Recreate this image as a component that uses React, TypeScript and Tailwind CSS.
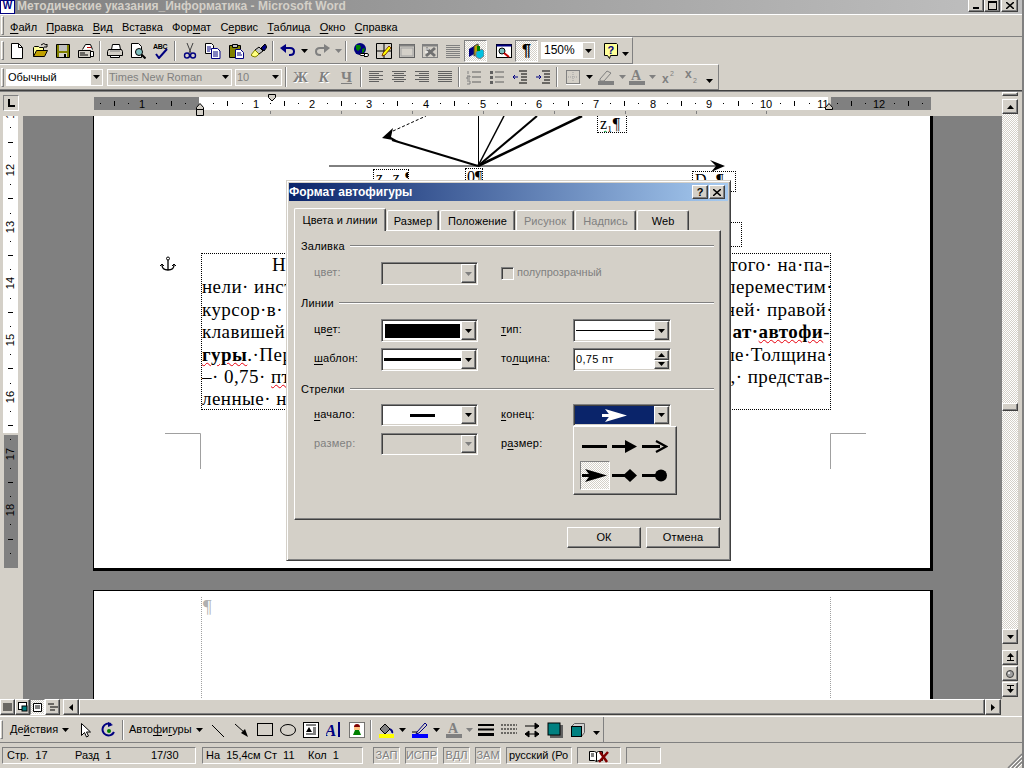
import type { ReactNode } from "react";

const raised =
	"border border-t-white border-l-white border-r-[#404040] border-b-[#404040] shadow-[inset_-1px_-1px_0_#808080]";
const sunken =
	"border border-t-[#808080] border-l-[#808080] border-r-white border-b-white shadow-[inset_1px_1px_0_#404040,inset_-1px_-1px_0_#d4d0c8]";
const thinSunken =
	"border border-t-[#808080] border-l-[#808080] border-r-white border-b-white";
const dither =
	"bg-[repeating-conic-gradient(#d4d0c8_0_25%,#fff_0_50%)] bg-[length:2px_2px]";
const groove = "shrink-0 w-[2px] h-[20px] border-l border-l-[#808080] border-r border-r-white";

function Ico({ children, w = 16, h = 16 }: { children: ReactNode; w?: number; h?: number }) {
	return (
		<svg width={w} height={h} viewBox={`0 0 ${w} ${h}`} className="block shrink-0">
			{children}
		</svg>
	);
}

function Tri({ color = "#000" }: { color?: string }) {
	return (
		<svg width="7" height="4" viewBox="0 0 7 4" className="block shrink-0">
			<polygon points="0,0 7,0 3.5,4" fill={color} />
		</svg>
	);
}

function Btn({ children, on, w = "w-[23px]" }: { children: ReactNode; on?: boolean; w?: string }) {
	return (
		<div
			className={`${w} h-[22px] shrink-0 flex items-center justify-center ${
				on ? `${thinSunken} ${dither}` : ""
			}`}
		>
			{children}
		</div>
	);
}

function Sep() {
	return (
		<div className="w-[6px] shrink-0 flex justify-center">
			<div className={groove} />
		</div>
	);
}

function Drop({ color, w = "w-[11px]" }: { color?: string; w?: string }) {
	return (
		<div className={`${w} h-[22px] shrink-0 flex items-center justify-center`}>
			<Tri color={color} />
		</div>
	);
}

function Grip() {
	return <div className="w-[3px] h-[19px] shrink-0 border border-t-white border-l-white border-r-[#808080] border-b-[#808080]" />;
}

function U({ children }: { children: ReactNode }) {
	return <span className="underline underline-offset-2">{children}</span>;
}

const iconNew = (
	<Ico>
		<path d="M2.5 .5h7l4 4v11h-11z" fill="#fff" stroke="#000" />
		<path d="M9.5 .5v4h4" fill="none" stroke="#000" />
	</Ico>
);
const iconOpen = (
	<Ico>
		<path d="M1.5 13.5v-9l1-1h4l1 1h4v3" fill="#ffff99" stroke="#000" />
		<path d="M1.5 13.5l3-6h11l-3 6z" fill="#c0a000" stroke="#000" />
		<path d="M9 2q3-3 5 0l1-1v3h-3" fill="none" stroke="#000" />
	</Ico>
);
const iconSave = (
	<Ico>
		<path d="M1.5 1.5h13v13h-13z" fill="#808000" stroke="#000" />
		<rect x="4" y="2" width="8" height="6" fill="#c0c0c0" />
		<rect x="4" y="10" width="8" height="4" fill="#d4d0c8" />
		<rect x="9" y="11" width="2" height="3" fill="#000" />
	</Ico>
);
const iconMail = (
	<Ico>
		<path d="M4.5 6.5l3-5h5l2 5" fill="#fff" stroke="#000" />
		<rect x="9" y="4" width="4" height="1" fill="#c00000" />
		<path d="M.5 7.5h12v7H.5z" fill="#d4d0c8" stroke="#000" />
		<path d="M2 10h5M2 12h8" stroke="#000" />
		<path d="M12.5 8.5h3v5h-3z" fill="#fff" stroke="#000" />
	</Ico>
);
const iconPrint = (
	<Ico>
		<path d="M4.5 6.5l1-5h7l1 5" fill="#fff" stroke="#000" />
		<path d="M1.5 6.5h13l1 2v4h-15v-4z" fill="#d4d0c8" stroke="#000" />
		<path d="M3 8h10" stroke="#808080" />
		<path d="M3.5 12.5h9v2h-9z" fill="#fff" stroke="#000" />
	</Ico>
);
const iconPreview = (
	<Ico>
		<path d="M1.5 .5h7l3 3v11h-10z" fill="#fff" stroke="#000" />
		<circle cx="9" cy="9" r="3.5" fill="#80c0c0" stroke="#000" />
		<path d="M11.5 11.5l4 4" stroke="#000" strokeWidth="2" />
	</Ico>
);
const iconSpell = (
	<Ico>
		<text x="0" y="6" fontSize="7" fontWeight="700" fontFamily="Liberation Sans" fill="#000" letterSpacing="-0.3">
			ABC
		</text>
		<path d="M3 11l3 4 8-9" fill="none" stroke="#000080" strokeWidth="2" />
	</Ico>
);
const iconCut = (
	<Ico>
		<path d="M5 0l4 10M11 0L7 10" stroke="#404040" fill="none" />
		<circle cx="5" cy="12.5" r="2.5" fill="none" stroke="#000080" strokeWidth="1.4" />
		<circle cx="11" cy="12.5" r="2.5" fill="none" stroke="#000080" strokeWidth="1.4" />
	</Ico>
);
const iconCopy = (
	<Ico>
		<path d="M.5 .5h6l2 2v8h-8z" fill="#fff" stroke="#000" />
		<path d="M2 4h4M2 6h4M2 8h3" stroke="#000080" />
		<path d="M6.5 5.5h6l2.5 2.5v7.5h-8.5z" fill="#fff" stroke="#000080" />
		<path d="M8 9h5M8 11h5M8 13h5" stroke="#000080" />
	</Ico>
);
const iconPaste = (
	<Ico>
		<path d="M1.5 2.5h11v12h-11z" fill="#808000" stroke="#000" />
		<path d="M4.5 1.5h5v3h-5z" fill="#c0c0c0" stroke="#000" />
		<path d="M7.5 6.5h5l3 3v6h-8z" fill="#fff" stroke="#000080" />
		<path d="M9 10h4M9 12h5" stroke="#000080" />
	</Ico>
);
const iconBrush = (
	<Ico>
		<path d="M10 5l3 3 3-4-2-3z" fill="#000080" stroke="#000" />
		<path d="M8 4l4 4-4 3-4-4z" fill="#c0c0c0" stroke="#000" />
		<path d="M4 7l4 4-2 2-2 1-3-1-1-1z" fill="#ffff80" stroke="#808000" />
	</Ico>
);
const iconUndo = (
	<Ico>
		<path d="M4 5h6q4 0 4 3.5t-4 3.5h-1" fill="none" stroke="#000080" strokeWidth="2" />
		<polygon points="0,5 6,1 6,10" fill="#000080" />
	</Ico>
);
const iconRedo = (
	<Ico>
		<path d="M12 5h-6q-4 0-4 3.5t4 3.5h1" fill="none" stroke="#808080" strokeWidth="2" />
		<polygon points="16,5 10,1 10,10" fill="#808080" />
	</Ico>
);
const iconWeb = (
	<Ico>
		<circle cx="7" cy="6" r="6" fill="#000080" />
		<path d="M3 2h4l1 3-3 3-2-2zM9 6l3-1-1 4-2 1z" fill="#008000" />
		<path d="M8 12.5h3.5v-2h-3.5a1 1 0 0 0 0 2zM11 13.500h3a1.5 1.5 0 0 0 0-3h-3" fill="#fff" stroke="#000" />
	</Ico>
);
const iconTables = (
	<Ico>
		<path d="M.5 .5h15v15H.5zM.5 8h15M8 .5v15" fill="none" stroke="#000" />
		<path d="M6 13l1-3 6-7 2 2-6 7z" fill="#ffff00" stroke="#804000" />
	</Ico>
);
const iconFrame = (
	<Ico>
		<rect x=".5" y="1.5" width="15" height="13" fill="#d4d0c8" stroke="#606060" />
		<rect x=".5" y="1.5" width="15" height="2" fill="#808080" />
		<rect x="2" y="5" width="12" height="8" fill="#d4d0c8" stroke="#a0a0a0" />
	</Ico>
);
const iconExcel = (
	<Ico>
		<rect x=".5" y="1.5" width="15" height="13" fill="#d4d0c8" stroke="#808080" />
		<rect x=".5" y="1.5" width="15" height="2" fill="#808080" />
		<path d="M4 5l9 8M13 5L4 13" stroke="#707070" strokeWidth="3" />
		<path d="M3 6h4M3 9h3" stroke="#fff" />
	</Ico>
);
const iconCols = (
	<Ico>
		<path d="M1 2.5h14M1 4.5h14M1 6.5h14M1 8.5h14M1 10.5h14M1 12.5h14M1 14.5h14" stroke="#808080" />
	</Ico>
);
const iconDraw = (
	<Ico>
		<path d="M1 14l5-3V3l-5 3z" fill="#000080" />
		<path d="M6 3l4-2 1 9-5 3z" fill="#c0a000" stroke="#404040" />
		<path d="M8 9l6-3 2 2v5l-4 3-4-2z" fill="#00c0e0" stroke="#808080" />
		<rect x="9" y="3" width="3" height="5" fill="#008000" />
	</Ico>
);
const iconMap = (
	<Ico>
		<rect x=".5" y="1.5" width="15" height="13" fill="#fff" stroke="#000" />
		<rect x=".5" y="1.5" width="15" height="2" fill="#000080" />
		<circle cx="6" cy="8" r="3" fill="#80c0c0" stroke="#000" />
		<path d="M8 10l5 4" stroke="#c00000" strokeWidth="2" />
	</Ico>
);
const iconHelp = (
	<Ico>
		<path d="M1.5 .5h12l1 1v11h-7l-1 3-2-3h-3z" fill="#ffff99" stroke="#000" />
		<text x="4.5" y="11" fontSize="11" fontWeight="700" fontFamily="Liberation Sans" fill="#000080">
			?
		</text>
	</Ico>
);

function Lines({ xs, color = "#606060" }: { xs: [number, number][]; color?: string }) {
	return (
		<Ico>
			{xs.map(([a, b], i) => (
				<rect key={i} x={a} y={2 + i * 2} width={b - a} height="1" fill={color} />
			))}
		</Ico>
	);
}

const iconNumbered = (
	<Ico>
		<path d="M6 3h9M6 8h9M6 13h9" stroke="#606060" />
		<path d="M2 2v3M1 7h3v1H1v2h3M1 12h3v3H1" stroke="#808080" fill="none" />
	</Ico>
);
const iconBullets = (
	<Ico>
		<path d="M6 3h9M6 8h9M6 13h9" stroke="#606060" />
		<rect x="1" y="2" width="3" height="3" fill="#606060" />
		<rect x="1" y="7" width="3" height="3" fill="#606060" />
		<rect x="1" y="12" width="3" height="3" fill="#606060" />
	</Ico>
);
const iconOutdent = (
	<Ico>
		<path d="M7 2h8M9 5h6M9 8h6M9 11h6M7 14h8" stroke="#000" />
		<path d="M6 8H1M3 6L1 8l2 2" stroke="#000080" fill="none" />
	</Ico>
);
const iconIndent = (
	<Ico>
		<path d="M7 2h8M9 5h6M9 8h6M9 11h6M7 14h8" stroke="#000" />
		<path d="M1 8h5M4 6l2 2-2 2" stroke="#000080" fill="none" />
	</Ico>
);
const iconBorders = (
	<Ico>
		<rect x="1.5" y="1.5" width="13" height="13" fill="#d4d0c8" stroke="#808080" />
		<path d="M8 3v10M3 8h10" stroke="#a0a0a0" strokeDasharray="1 1" />
		<path d="M1 15.5h15" stroke="#fff" />
	</Ico>
);
const iconHighlight = (
	<Ico>
		<path d="M2 10l7-8 4 2-7 8H2z" fill="#d4d0c8" stroke="#808080" />
		<rect x="0" y="12" width="16" height="4" fill="#808080" />
	</Ico>
);
const iconColorA = (
	<Ico>
		<text x="2" y="11" fontSize="14" fontWeight="700" fontFamily="Liberation Serif" fill="#808080">
			A
		</text>
		<rect x="0" y="12" width="16" height="4" fill="#808080" />
	</Ico>
);
const iconSup = (
	<Ico>
		<text x="1" y="14" fontSize="12" fontWeight="700" fontFamily="Liberation Sans" fill="#808080">
			x
		</text>
		<text x="9" y="7" fontSize="7" fontFamily="Liberation Sans" fill="#808080">
			2
		</text>
	</Ico>
);
const iconSub = (
	<Ico>
		<text x="1" y="9" fontSize="12" fontWeight="700" fontFamily="Liberation Sans" fill="#808080">
			x
		</text>
		<text x="9" y="14" fontSize="7" fontFamily="Liberation Sans" fill="#808080">
			2
		</text>
	</Ico>
);

function TitleBar() {
	return (
		<div className="h-[15px] shrink-0 border-b border-b-white flex items-center bg-[linear-gradient(90deg,#808080,#c0c0c0)] overflow-hidden">
			<div className="w-[15px] h-[14px] shrink-0 bg-white border border-[#000080] text-[#000080] text-[10px] leading-[10px] font-bold text-center">
				W
			</div>
			<span className="ml-[2px] text-[12px] font-bold text-[#d4d0c8] whitespace-nowrap leading-[14px] -mt-[2px]">
				Методические указания_Информатика - Microsoft Word
			</span>
			<div className="ml-auto flex mr-[4px] -mt-[3px]">
				<div className={`w-[16px] h-[13px] ${raised} bg-[#d4d0c8] flex items-end justify-center pb-[2px]`}>
					<div className="w-[6px] h-[2px] bg-black" />
				</div>
				<div className={`w-[16px] h-[13px] ${raised} bg-[#d4d0c8] flex items-end justify-center pb-[1px]`}>
					<div className="w-[9px] h-[9px] border border-black border-t-2" />
				</div>
				<div className={`w-[17px] h-[13px] ml-[1px] ${raised} bg-[#d4d0c8] flex items-center justify-center`}>
					<svg width="8" height="7" viewBox="0 0 8 7" className="block">
						<path d="M0 0l8 7M8 0L0 7" stroke="#000" strokeWidth="1.5" />
					</svg>
				</div>
			</div>
		</div>
	);
}

function MenuBar() {
	return (
		<div className="h-[22px] shrink-0 border-b border-b-[#808080] flex items-center pl-[1px]">
			<Grip />
			<div className="ml-[6px] mt-[3px] flex gap-[9.25px] text-[11px] text-black">
				<span><U>Ф</U>айл</span>
				<span><U>П</U>равка</span>
				<span><U>В</U>ид</span>
				<span>Вст<U>а</U>вка</span>
				<span>Фор<U>м</U>ат</span>
				<span>С<U>е</U>рвис</span>
				<span><U>Т</U>аблица</span>
				<span><U>О</U>кно</span>
				<span><U>С</U>правка</span>
			</div>
		</div>
	);
}

function StandardBar() {
	return (
		<div className="h-[27px] shrink-0 flex">
			<div className="w-[633px] border-r border-r-[#808080] border-b border-b-[#808080] border-t border-t-white flex items-center pl-[1px]">
				<Grip />
				<div className="w-[1px]" />
				<Btn>{iconNew}</Btn>
				<Btn>{iconOpen}</Btn>
				<Btn>{iconSave}</Btn>
				<Btn>{iconMail}</Btn>
				<Sep />
				<Btn>{iconPrint}</Btn>
				<Btn>{iconPreview}</Btn>
				<Btn>{iconSpell}</Btn>
				<Sep />
				<Btn>{iconCut}</Btn>
				<Btn>{iconCopy}</Btn>
				<Btn>{iconPaste}</Btn>
				<Btn>{iconBrush}</Btn>
				<Sep />
				<Btn>{iconUndo}</Btn>
				<Drop w="w-[11px]" />
				<Btn>{iconRedo}</Btn>
				<Drop color="#808080" w="w-[10px]" />
				<Sep />
				<Btn>{iconWeb}</Btn>
				<Btn>{iconTables}</Btn>
				<Btn>{iconFrame}</Btn>
				<Btn>{iconExcel}</Btn>
				<Btn>{iconCols}</Btn>
				<Btn on>{iconDraw}</Btn>
				<div className="w-[5px]" />
				<Btn>{iconMap}</Btn>
				<Btn on>
					<span className="text-[16px] font-bold leading-none text-black">¶</span>
				</Btn>
				<div className="w-[3px]" />
				<div className="w-[54px] h-[17px] flex bg-white border border-white">
					<span className="flex-1 pl-[2px] text-[12px] leading-[15px] text-black">150%</span>
					<div className="w-[11px] bg-[#d4d0c8] flex items-center justify-center"><Tri /></div>
				</div>
				<div className="w-[4px]" />
				<Btn>{iconHelp}</Btn>
				<div className="w-[7px] mt-[7px]"><Tri /></div>
			</div>
		</div>
	);
}

function FormatCombo({ w, text, off }: { w: string; text: string; off?: boolean }) {
	return (
		<div className={`${w} h-[17px] shrink-0 flex border border-white ${off ? "" : "bg-white"}`}>
			<span className={`flex-1 pl-[1px] text-[11px] leading-[15px] whitespace-nowrap overflow-hidden ${off ? "text-[#808080]" : "text-black"}`}>
				{text}
			</span>
			<div className="w-[11px] bg-[#d4d0c8] flex items-center justify-center"><Tri /></div>
		</div>
	);
}

function FormatBar() {
	return (
		<div className="h-[26px] shrink-0 flex">
			<div className="w-[719px] border-r border-r-[#808080] border-b border-b-[#808080] border-t border-t-white flex items-center pl-[1px]">
				<Grip />
				<div className="w-[2px]" />
				<FormatCombo w="w-[97px]" text="Обычный" />
				<div className="w-[4px]" />
				<FormatCombo w="w-[125px]" text="Times New Roman" off />
				<div className="w-[3px]" />
				<FormatCombo w="w-[47px]" text="10" off />
				<div className="w-[1px]" />
				<Sep />
				<Btn><span className="font-['Liberation_Serif'] font-bold text-[15px] text-[#808080] leading-none [text-shadow:1px_1px_0_#fff]">Ж</span></Btn>
				<Btn><span className="font-['Liberation_Serif'] font-bold italic text-[15px] text-[#808080] leading-none [text-shadow:1px_1px_0_#fff]">К</span></Btn>
				<Btn><span className="font-['Liberation_Serif'] font-bold underline text-[15px] text-[#808080] leading-none">Ч</span></Btn>
				<Sep />
				<Btn><Lines xs={[[1, 15], [1, 11], [1, 15], [1, 11], [1, 15], [1, 11]]} /></Btn>
				<Btn><Lines xs={[[1, 15], [3, 13], [1, 15], [3, 13], [1, 15], [3, 13]]} /></Btn>
				<Btn><Lines xs={[[1, 15], [5, 15], [1, 15], [5, 15], [1, 15], [5, 15]]} /></Btn>
				<Btn><Lines xs={[[1, 15], [1, 15], [1, 15], [1, 15], [1, 15], [1, 15]]} /></Btn>
				<Sep />
				<Btn>{iconNumbered}</Btn>
				<Btn>{iconBullets}</Btn>
				<Btn>{iconOutdent}</Btn>
				<Btn>{iconIndent}</Btn>
				<Sep />
				<div className="w-[1px]" />
				<Btn>{iconBorders}</Btn>
				<Drop w="w-[10px]" />
				<Btn>{iconHighlight}</Btn>
				<Drop color="#808080" w="w-[10px]" />
				<Btn w="w-[20px]">{iconColorA}</Btn>
				<Drop color="#808080" w="w-[10px]" />
				<Btn>{iconSup}</Btn>
				<Btn>{iconSub}</Btn>
				<div className="w-[7px] ml-[3px] mt-[7px]"><Tri /></div>
			</div>
		</div>
	);
}

const CM = 56.7;
const rulerMarks = Array.from({ length: 60 }, (_, i) => -1.75 + i * 0.25);

function HRuler() {
	const xOf = (v: number) => 199 + v * CM;
	return (
		<svg width="840" height="24" viewBox="94 92 840 24" className="block">
			<rect x="94" y="97" width="105" height="13" fill="#808080" />
			<rect x="199" y="97" width="629" height="13" fill="#fff" />
			<rect x="831" y="97" width="100" height="13" fill="#808080" />
			{rulerMarks.map((v) => {
				const x = Math.round(xOf(v));
				if (x > 928) return null;
				if (Number.isInteger(v)) {
					if (v === 0) return null;
					return (
						<text key={v} x={x} y="108" fontSize="11" textAnchor="middle" fontFamily="Liberation Sans" fill="#000">
							{Math.abs(v)}
						</text>
					);
				}
				if (v % 0.5 === 0) return <rect key={v} x={x} y="101" width="1" height="5" fill="#000" />;
				return <rect key={v} x={x} y="103" width="1" height="1" fill="#000" />;
			})}
			{[270, 341, 412, 483, 554, 625, 696, 766].map((x) => (
				<rect key={x} x={x} y="111" width="1" height="3" fill="#808080" />
			))}
			<path d="M196.5 109.5v-2l3.5-4 3.5 4v2zM196.5 109.5h7v6h-7z" fill="#d4d0c8" stroke="#000" />
			<path d="M268.5 94.5h7v3l-3.5 3.5-3.5-3.5z" fill="#d4d0c8" stroke="#000" />
			<path d="M825.5 109.5v-2l3.5-4 3.5 4v2z" fill="#d4d0c8" stroke="#000" />
		</svg>
	);
}

const vMarks = Array.from({ length: 34 }, (_, i) => 11 + i * 0.25);

function VRuler() {
	const yOf = (v: number) => 170 + (v - 12) * CM;
	return (
		<svg width="23" height="583" viewBox="0 116 23 583" className="block">
			<rect x="3" y="116" width="15" height="317" fill="#fff" />
			<rect x="4" y="435" width="14" height="133" fill="#808080" />
			{vMarks.map((v) => {
				const y = Math.round(yOf(v));
				if (y > 566 || y === 433) return null;
				if (Number.isInteger(v)) {
					return (
						<text key={v} x="0" y="0" transform={`translate(14 ${y}) rotate(-90)`} fontSize="11" textAnchor="middle" fontFamily="Liberation Sans" fill="#000">
							{v}
						</text>
					);
				}
				if (v % 0.5 === 0) return <rect key={v} x="8" y={y} width="5" height="1" fill="#000" />;
				return <rect key={v} x="10" y={y} width="1" height="1" fill="#000" />;
			})}
		</svg>
	);
}

function Note({ className, children }: { className: string; children?: ReactNode }) {
	return (
		<div className={`absolute border border-dotted border-black font-['Liberation_Serif'] text-[16px] leading-[16px] text-black whitespace-nowrap overflow-hidden ${className}`}>
			{children}
		</div>
	);
}

function Diagram() {
	return (
		<svg width="836" height="455" viewBox="94 116 836 455" className="absolute left-0 top-0">
			<path d="M329 166H716" stroke="#000" strokeWidth="1" />
			<polygon points="725,166 710,160 716,166 711,172" fill="#000" />
			<path d="M478 166L392 140" stroke="#000" strokeWidth="2" />
			<polygon points="382,138 393,128 391,137 398,141" fill="#000" />
			<path d="M393 131L426 116" stroke="#000" strokeDasharray="3 2" />
			<path d="M478.5 166V116" stroke="#000" />
			<path d="M478 166L504 116" stroke="#000" strokeWidth="1.5" />
			<path d="M478 166L537 116" stroke="#000" strokeWidth="2" />
			<path d="M478 166L582 116" stroke="#000" strokeWidth="2.5" />
			<path d="M165 433.5H200.5V469M866 433.5H830.5V469" fill="none" stroke="#a0a0a0" />
		</svg>
	);
}

function Wavy({ children }: { children: ReactNode }) {
	return <span className="underline decoration-wavy decoration-red-600 decoration-1">{children}</span>;
}

function TextLine({ left, right, hang }: { left: ReactNode; right?: ReactNode; hang?: boolean }) {
	return (
		<div className="h-[22.4px] flex justify-between whitespace-pre">
			<span>{left}</span>
			<span className={hang ? "-mr-[3px]" : ""}>{right}</span>
		</div>
	);
}

function Doc() {
	return (
		<div className="flex-1 bg-[#808080] overflow-hidden pl-[70px]">
			<div className="relative w-[840px] h-[455px] bg-white border-l border-l-black border-r-[3px] border-r-black border-b-[3px] border-b-black">
				<Diagram />
				<Note className="left-[503px] top-0 w-[30px] h-[17px] border-t-0 pl-[2px]">
					<span className="underline decoration-wavy decoration-green-600 decoration-1">z₁</span>¶
				</Note>
				<Note className="left-[279px] top-[53px] w-[36px] h-[40px] pl-[2px]">z₂ z₃¶</Note>
				<Note className="left-[371px] top-[52px] w-[18px] h-[40px] pl-[1px]">0¶</Note>
				<Note className="left-[598px] top-[55px] w-[44px] h-[21px] pl-[2px]">D₁ ¶</Note>
				<Note className="left-[560px] top-[106px] w-[88px] h-[25px]" />
				<svg width="16" height="16" viewBox="0 0 16 16" className="absolute left-[66px] top-[140px]">
					<circle cx="8" cy="2.5" r="1.5" fill="none" stroke="#000" />
					<path d="M8 4v10M2 9q0 5 6 5t6-5" fill="none" stroke="#000" strokeWidth="1.3" />
					<path d="M0 10l2-2 2 2M12 10l2-2 2 2" fill="none" stroke="#000" />
				</svg>
				<div className="absolute left-[107px] top-[137px] w-[630px] h-[157px] border border-dotted border-black font-['Liberation_Serif'] text-[19px] leading-[22.4px] text-black tracking-[0.45px]">
					<TextLine left={<span className="pl-[70px]">Н</span>} right="крытого· на·па-" />
					<TextLine left="нели· инст" right="переместим·" hang />
					<TextLine left="курсор·в· с" right="ней· правой·" hang />
					<TextLine left="клавишей" right={<><b>ат·</b><b><Wavy>автофи</Wavy></b>-</>} />
					<TextLine left={<><b><Wavy>гуры</Wavy></b>.·Пер</>} right="ле·Толщина·" hang />
					<TextLine left={<>–· 0,75· <Wavy>пт</Wavy>,</>} right="ы,· представ-" />
					<TextLine left="ленные· на" />
				</div>
			</div>
			<div className="relative mt-[19px] w-[840px] h-[200px] bg-white border-l border-l-black border-t border-t-black border-r-[3px] border-r-black">
				<div className="absolute left-[107px] top-[6px] bottom-0 border-l border-dotted border-l-[#a0a0a0] pl-[1px] font-['Liberation_Serif'] text-[19px] leading-[20px] text-[#b0b0b0]">
					¶
				</div>
				<div className="absolute left-[736px] top-[6px] bottom-0 border-l border-dotted border-l-[#a0a0a0]" />
			</div>
		</div>
	);
}

function ScrollBtn({ children }: { children: ReactNode }) {
	return <div className={`w-[16px] h-[15px] shrink-0 bg-[#d4d0c8] flex items-center justify-center ${raised}`}>{children}</div>;
}

function UpTri() {
	return (
		<svg width="7" height="4" viewBox="0 0 7 4" className="block">
			<polygon points="0,4 7,4 3.5,0" fill="#000" />
		</svg>
	);
}

function Dbl({ up }: { up?: boolean }) {
	return (
		<svg width="7" height="9" viewBox="0 0 7 9" className="block">
			{up ? (
				<>
					<polygon points="0,4 7,4 3.5,0" fill="#000" />
					<rect x="0" y="7" width="7" height="1" fill="#000" />
					<rect x="3" y="4" width="1" height="3" fill="#000" />
				</>
			) : (
				<>
					<rect x="0" y="0" width="7" height="1" fill="#000" />
					<polygon points="0,4 7,4 3.5,8" fill="#000" />
					<rect x="3" y="1" width="1" height="3" fill="#000" />
				</>
			)}
		</svg>
	);
}

function VScroll() {
	return (
		<div className="w-[20px] shrink-0 flex flex-col">
			<div className={`w-[16px] h-[4px] shrink-0 ${raised}`} />
			<div className="h-[3px] shrink-0" />
			<ScrollBtn><UpTri /></ScrollBtn>
			<div className={`w-[16px] h-[289px] shrink-0 ${dither}`} />
			<div className={`w-[16px] h-[8px] shrink-0 ${raised}`} />
			<div className={`w-[16px] flex-1 ${dither}`} />
			<ScrollBtn><Tri /></ScrollBtn>
			<div className="h-[6px] shrink-0" />
			<ScrollBtn><Dbl up /></ScrollBtn>
			<div className="h-[1px] shrink-0" />
			<ScrollBtn>
				<svg width="8" height="8" viewBox="0 0 8 8" className="block">
					<circle cx="4" cy="4" r="3.5" fill="#a0a0a0" stroke="#404040" />
					<circle cx="3" cy="3" r="1" fill="#fff" />
				</svg>
			</ScrollBtn>
			<div className="h-[1px] shrink-0" />
			<ScrollBtn><Dbl /></ScrollBtn>
			<div className="h-[2px] shrink-0" />
		</div>
	);
}

function HScroll() {
	const views = [
		<svg key="a" width="9" height="9" viewBox="0 0 9 9" className="block"><path d="M0 1h9M0 3h9M0 5h9M0 7h9" stroke="#000" /></svg>,
		<svg key="b" width="10" height="10" viewBox="0 0 10 10" className="block"><rect x=".5" y=".5" width="8" height="7" fill="#fff" stroke="#000" /><rect x="4" y="4" width="5" height="5" fill="#008080" stroke="#000" /></svg>,
		<svg key="c" width="9" height="9" viewBox="0 0 9 9" className="block"><path d="M.5 .5h8v8h-8z" fill="#fff" stroke="#000" /><path d="M2 3h5M2 5h5" stroke="#000" /></svg>,
		<svg key="d" width="10" height="9" viewBox="0 0 10 9" className="block"><path d="M0 1h6M2 4h8M2 7h5" stroke="#000" /></svg>,
	];
	return (
		<div className="h-[18px] shrink-0 flex border-b border-b-white pb-[1px]">
			{views.map((v, i) => (
				<div key={i} className={`w-[15px] h-[16px] flex items-center justify-center ${i === 2 ? `${thinSunken} ${dither}` : raised}`}>
					{v}
				</div>
			))}
			<div className="w-[3px]" />
			<div className={`w-[16px] h-[16px] flex items-center justify-center ${raised}`}>
				<svg width="4" height="7" viewBox="0 0 4 7" className="block"><polygon points="4,0 4,7 0,3.5" fill="#000" /></svg>
			</div>
			<div className={`w-[906px] h-[16px] ${raised}`} />
			<div className={`w-[16px] h-[16px] flex items-center justify-center ${raised}`}>
				<svg width="4" height="7" viewBox="0 0 4 7" className="block"><polygon points="0,0 0,7 4,3.5" fill="#000" /></svg>
			</div>
		</div>
	);
}

function DrawBar() {
	return (
		<div className="h-[26px] shrink-0 flex border-b border-b-[#808080]">
			<div className="w-[604px] border-r border-r-[#808080] flex items-center">
				<Grip />
				<div className="w-[7px]" />
				<div className="w-[59px] flex items-center gap-[4px] text-[11px] text-black whitespace-nowrap">
					<span>Де<U>й</U>ствия</span>
					<Tri />
				</div>
				<div className="w-[5px]" />
				<Btn>
					<Ico><path d="M3.5 1.5v12l3-3 2 4.5 2-1-2-4h4z" fill="#fff" stroke="#000" /></Ico>
				</Btn>
				<Btn>
					<Ico>
						<path d="M13 10a6 6 0 1 1-3-8" fill="none" stroke="#000080" strokeWidth="2" />
						<polygon points="7,0 12,3 7,5" fill="#000080" />
						<circle cx="8" cy="9" r="2" fill="#008000" />
					</Ico>
				</Btn>
				<Sep />
				<div className="w-[3px]" />
				<div className="w-[78px] flex items-center gap-[4px] text-[11px] text-black whitespace-nowrap">
					<span>Авто<U>ф</U>и<U>г</U>уры</span>
					<Tri />
				</div>
				<Btn><Ico><path d="M1 3l12 12" stroke="#000" /></Ico></Btn>
				<Btn><Ico><path d="M1 2l10 9" stroke="#000" /><polygon points="14,15 7,11 11,7" fill="#000" /></Ico></Btn>
				<Btn><Ico><rect x=".5" y="1.5" width="15" height="12" fill="none" stroke="#000" /></Ico></Btn>
				<Btn><Ico><ellipse cx="8" cy="8" rx="7.5" ry="5.5" fill="none" stroke="#000" /></Ico></Btn>
				<Btn>
					<Ico>
						<rect x=".5" y=".5" width="15" height="15" fill="#fff" stroke="#000" />
						<path d="M3 3h10" stroke="#000" />
						<polygon points="3,10 6,5 9,10" fill="#000" />
						<path d="M10 6h3M10 8h3M10 10h3M3 12h10" stroke="#000" />
					</Ico>
				</Btn>
				<Btn>
					<Ico>
						<text x="-1" y="14" fontSize="17" fontWeight="700" fontStyle="italic" fontFamily="Liberation Serif" fill="#000080">A</text>
						<rect x="12" y="0" width="2" height="15" fill="#000080" />
					</Ico>
				</Btn>
				<Btn>
					<Ico>
						<rect x=".5" y=".5" width="15" height="15" fill="#fff" stroke="#000" strokeDasharray="1 1" />
						<circle cx="8" cy="5" r="3" fill="#800000" />
						<rect x="5" y="5" width="6" height="3" fill="#ffc080" />
						<path d="M4 13l2-5h4l2 5z" fill="#008000" />
					</Ico>
				</Btn>
				<Sep />
				<Btn>
					<Ico>
						<path d="M2 7l5-5 5 5-5 5z" fill="#808080" stroke="#000" />
						<path d="M12 7q3 2 2 4" stroke="#000080" fill="none" strokeWidth="2" />
						<rect x="1" y="12" width="15" height="4" fill="#ffff00" />
					</Ico>
				</Btn>
				<Drop w="w-[11px]" />
				<Btn>
					<Ico>
						<path d="M5 10L13 1l2 2-8 8-3 1z" fill="#d4d0c8" stroke="#000080" />
						<path d="M0 10h5" stroke="#000" />
						<rect x="0" y="12" width="16" height="4" fill="#0000ff" />
					</Ico>
				</Btn>
				<Drop w="w-[11px]" />
				<Btn>{iconColorA}</Btn>
				<Drop color="#808080" w="w-[9px]" />
				<Btn><Ico><path d="M0 3h16M0 7.5h16" stroke="#000" strokeWidth="2" /><path d="M0 12.5h16" stroke="#000" strokeWidth="3" /></Ico></Btn>
				<Btn><Ico><path d="M0 3h16M0 7h16M0 11h16" stroke="#000" strokeDasharray="2 1" /></Ico></Btn>
				<Btn>
					<Ico>
						<path d="M1 4h14M15 4l-4-3v6zM1 12h14M1 12l4-3v6zM15 12l-4-3v6z" stroke="#000" fill="#000" />
					</Ico>
				</Btn>
				<Btn>
					<Ico>
						<rect x="3" y="3" width="13" height="13" fill="#606060" />
						<rect x="1" y="1" width="12" height="12" fill="#008080" stroke="#000" />
					</Ico>
				</Btn>
				<Btn>
					<Ico>
						<path d="M1.5 4.5l3-3h10v9l-3 4h-10z" fill="#d0d0d0" stroke="#606060" />
						<rect x="1.5" y="4.5" width="10" height="10" fill="#008080" stroke="#000" />
					</Ico>
				</Btn>
				<div className="w-[7px] ml-[4px] mt-[7px]"><Tri /></div>
			</div>
		</div>
	);
}

function StatusCell({ w, off, children, className = "" }: { w: string; off?: boolean; children?: ReactNode; className?: string }) {
	return (
		<div
			className={`${w} h-[17px] shrink-0 ${thinSunken} flex items-center whitespace-pre text-[11px] leading-[15px] ${
				off ? "text-[#808080] justify-center [text-shadow:1px_1px_0_#fff]" : "text-black"
			} ${className}`}
		>
			{children}
		</div>
	);
}

function StatusBar() {
	return (
		<div className="h-[25px] shrink-0 flex items-start pt-[4px] pl-[2px] relative">
			<StatusCell w="w-[194px]">
				<span className="w-[72px] pl-[4px]">Стр.  17</span>
				<span className="w-[76px]">Разд  1</span>
				<span>17/30</span>
			</StatusCell>
			<div className="w-[6px]" />
			<StatusCell w="w-[161px]">
				<span className="w-[61px] pl-[3px]">На  15,4см</span>
				<span className="w-[44px]">Ст  11</span>
				<span>Кол  1</span>
			</StatusCell>
			<div className="w-[10px]" />
			<StatusCell w="w-[27px]" off>ЗАП</StatusCell>
			<div className="w-[5px]" />
			<StatusCell w="w-[33px]" off>ИСПР</StatusCell>
			<div className="w-[5px]" />
			<StatusCell w="w-[27px]" off>ВДЛ</StatusCell>
			<div className="w-[5px]" />
			<StatusCell w="w-[26px]" off>ЗАМ</StatusCell>
			<div className="w-[5px]" />
			<StatusCell w="w-[66px]" className="pl-[2px]">русский (Ро</StatusCell>
			<div className="w-[5px]" />
			<StatusCell w="w-[44px]" className="justify-center">
				<svg width="22" height="14" viewBox="0 0 22 14" className="block">
					<path d="M1.5 2.5h5l2 1 2-1h4v9h-4l-2 1-2-1h-5z" fill="#fff" stroke="#000" />
					<path d="M8.5 3.5v9M3 5h3M3 7h3" stroke="#000" />
					<path d="M11 13L20 3M12 3l7 10" stroke="#800000" strokeWidth="2.5" />
				</svg>
			</StatusCell>
			<div className="w-[5px]" />
			<StatusCell w="w-[35px]" />
			<svg width="15" height="15" viewBox="0 0 15 15" className="absolute right-0 bottom-0">
				<path d="M15 1L1 15M15 5L5 15M15 9l-6 6" stroke="#808080" strokeWidth="1.5" />
				<path d="M15 3L3 15M15 7l-8 8M15 11l-4 4" stroke="#fff" />
			</svg>
		</div>
	);
}

function DlgCombo({ w = "w-[97px]", off, selected, children }: { w?: string; off?: boolean; selected?: boolean; children?: ReactNode }) {
	return (
		<div className={`${w} h-full shrink-0 ${sunken} ${off ? "" : selected ? "bg-[#0a246a]" : "bg-white"} flex items-stretch p-[1px]`}>
			<div className="flex-1 flex items-center justify-center pl-[1px] overflow-hidden">{children}</div>
			<div className={`w-[15px] shrink-0 bg-[#d4d0c8] ${raised} flex items-center justify-center`}>
				<Tri color={off ? "#808080" : "#000"} />
			</div>
		</div>
	);
}

function Heading({ title, className }: { title: string; className: string }) {
	return (
		<div className={`h-[16px] flex items-center pl-[6px] pr-[6px] gap-[5px] ${className}`}>
			<span className="text-[11px] tracking-[0.2px] text-black">{title}</span>
			<div className="flex-1 h-[2px] border-t border-t-[#808080] border-b border-b-white" />
		</div>
	);
}

function Label({ w, off, children }: { w: string; off?: boolean; children: ReactNode }) {
	return <span className={`${w} shrink-0 text-[11px] tracking-[0.2px] -mt-[2px] ${off ? "text-[#808080]" : "text-black"}`}>{children}</span>;
}

function Row({ h, className, children }: { h: string; className: string; children: ReactNode }) {
	return <div className={`${h} shrink-0 flex items-center pl-[19px] ${className}`}>{children}</div>;
}

function ArrowEnd({ kind, white }: { kind: string; white?: boolean }) {
	const c = white ? "#fff" : "#000";
	return (
		<svg width="26" height="13" viewBox="0 0 26 13" className="block">
			<rect x="0" y="5" width={kind === "none" ? 25 : 18} height="3" fill={c} />
			{kind === "tri" && <polygon points="13,0 25,6.5 13,13" fill={c} />}
			{kind === "open" && <path d="M14 1l10 5.5L14 12" fill="none" stroke={c} strokeWidth="2.2" />}
			{kind === "stealth" && <polygon points="3,0 25,6.5 3,13 8,6.5" fill={c} />}
			{kind === "diamond" && <polygon points="18,0 25,6.5 18,13 11,6.5" fill={c} />}
			{kind === "oval" && <circle cx="19" cy="6.5" r="6" fill={c} />}
		</svg>
	);
}

const tabs = [
	{ t: "Размер", w: "w-[52px]" },
	{ t: "Положение", w: "w-[75px]" },
	{ t: "Рисунок", w: "w-[58px]", off: true },
	{ t: "Надпись", w: "w-[61px]", off: true },
	{ t: "Web", w: "w-[52px]" },
];

function Dialog() {
	return (
		<div className="absolute left-[286px] top-[180px] w-[445px] h-[381px] bg-[#d4d0c8] border border-t-[#d4d0c8] border-l-[#d4d0c8] border-r-[#404040] border-b-[#404040] shadow-[inset_1px_1px_0_#fff,inset_-1px_-1px_0_#808080] p-[2px] flex flex-col">
			<div className="h-[18px] shrink-0 bg-[linear-gradient(90deg,#0a246a,#a6caf0)] flex items-center pr-[3px]">
				<span className="text-[12px] font-bold text-white">Формат автофигуры</span>
				<div className="ml-auto flex gap-[1px]">
					<div className={`w-[16px] h-[14px] bg-[#d4d0c8] ${raised} flex items-center justify-center text-[11px] font-bold leading-none text-black`}>?</div>
					<div className={`w-[16px] h-[14px] bg-[#d4d0c8] ${raised} flex items-center justify-center`}>
						<svg width="8" height="7" viewBox="0 0 8 7" className="block">
							<path d="M0 0l8 7M8 0L0 7" stroke="#000" strokeWidth="1.5" />
						</svg>
					</div>
				</div>
			</div>
			<div className="h-[22px] mt-[7px] shrink-0 flex items-end pl-[5px] relative z-10">
				<div className="w-[92px] h-[23px] -mb-[1px] pt-[1px] bg-[#d4d0c8] border-t border-l border-t-white border-l-white border-r border-r-[#404040] shadow-[inset_-1px_0_0_#808080] rounded-t-[2px] flex items-center justify-center text-[11px] tracking-[0.1px] text-black">
					Цвета и линии
				</div>
				{tabs.map((tab) => (
					<div
						key={tab.t}
						className={`${tab.w} h-[20px] ml-[1px] pt-[1px] bg-[#d4d0c8] border-t border-l border-t-white border-l-white border-r border-r-[#404040] shadow-[inset_-1px_0_0_#808080] rounded-t-[2px] flex items-center justify-center text-[11px] tracking-[0.1px] ${
							tab.off ? "text-[#808080]" : "text-black"
						}`}
					>
						{tab.t}
					</div>
				))}
			</div>
			<div className="ml-[5px] w-[427px] h-[290px] shrink-0 border-t border-l border-t-white border-l-white border-r border-b border-r-[#404040] border-b-[#404040] shadow-[inset_-1px_-1px_0_#808080] pt-[7px] flex flex-col">
				<Heading title="Заливка" className="" />
				<Row h="h-[23px]" className="mt-[8px]">
					<Label w="w-[67px]" off>цвет:</Label>
					<DlgCombo off />
					<div className="w-[23px]" />
					<div className={`w-[13px] h-[13px] ${sunken}`} />
					<span className="ml-[3px] text-[11px] -mt-[2px] text-[#808080]">полупрозрачный</span>
				</Row>
				<Heading title="Линии" className="mt-[10px]" />
				<Row h="h-[23px]" className="mt-[8px]">
					<Label w="w-[67px]">цв<U>е</U>т:</Label>
					<DlgCombo>
						<div className="w-[75px] h-[14px] bg-black" />
					</DlgCombo>
					<div className="w-[23px]" />
					<Label w="w-[72px]"><U>т</U>ип:</Label>
					<DlgCombo w="w-[98px]">
						<div className="w-full h-[1px] bg-black" />
					</DlgCombo>
				</Row>
				<Row h="h-[23px]" className="mt-[6px]">
					<Label w="w-[67px]"><U>ш</U>аблон:</Label>
					<DlgCombo>
						<div className="w-full h-[3px] bg-black" />
					</DlgCombo>
					<div className="w-[23px]" />
					<Label w="w-[72px]">то<U>л</U>щина:</Label>
					<div className={`w-[98px] h-full shrink-0 ${sunken} bg-white flex items-stretch p-[1px]`}>
						<span className="flex-1 pl-[1px] text-[11px] tracking-[0.3px] leading-[19px] text-black">0,75 пт</span>
						<div className="w-[15px] flex flex-col bg-[#d4d0c8]">
							<div className={`flex-1 ${raised} flex items-center justify-center`}><UpTri /></div>
							<div className={`flex-1 ${raised} flex items-center justify-center`}><Tri /></div>
						</div>
					</div>
				</Row>
				<Heading title="Стрелки" className="mt-[10px]" />
				<Row h="h-[22px]" className="mt-[7px]">
					<Label w="w-[67px]"><U>н</U>ачало:</Label>
					<DlgCombo>
						<div className="w-[25px] h-[3px] bg-black" />
					</DlgCombo>
					<div className="w-[23px]" />
					<Label w="w-[72px]"><U>к</U>онец:</Label>
					<DlgCombo w="w-[98px]" selected>
						<ArrowEnd kind="stealth" white />
					</DlgCombo>
				</Row>
				<Row h="h-[22px]" className="mt-[7px]">
					<Label w="w-[67px]" off>размер:</Label>
					<DlgCombo off />
					<div className="w-[23px]" />
					<Label w="w-[72px]">р<U>а</U>змер:</Label>
				</Row>
			</div>
			<div className="mt-[7px] pl-[278px] flex gap-[5px]">
				<div className={`w-[74px] h-[21px] ${raised} flex items-center justify-center text-[11px] text-black`}>ОК</div>
				<div className={`w-[74px] h-[21px] ${raised} flex items-center justify-center text-[11px] tracking-[0.2px] text-black`}>Отмена</div>
			</div>
			<div className={`absolute left-[286px] top-[245px] w-[104px] h-[69px] z-20 bg-[#d4d0c8] ${raised} pl-[6px] pt-[5px] grid grid-cols-[30px_30px_30px] grid-rows-[29px_29px]`}>
				{["none", "tri", "open", "stealth", "diamond", "oval"].map((k) => (
					<div key={k} className={`flex items-center justify-center ${k === "stealth" ? `${thinSunken} ${dither}` : ""}`}>
						<ArrowEnd kind={k} />
					</div>
				))}
			</div>
		</div>
	);
}

export default function App() {
	return (
		<div className="relative w-[1024px] h-[768px] overflow-hidden bg-[#d4d0c8] border-r-2 border-r-[#808080] flex flex-col font-['Liberation_Sans',sans-serif] select-none">
			<TitleBar />
			<MenuBar />
			<StandardBar />
			<FormatBar />
			<div className="h-[2px] shrink-0 bg-[#404040] border-b border-b-[#808080]" />
			<div className="h-[607px] shrink-0 flex">
				<div className="w-[1002px] shrink-0 flex flex-col">
					<div className="h-[24px] shrink-0 flex">
						<div className="w-[94px] shrink-0 pl-[3px] pt-[3px]">
							<div className={`w-[16px] h-[16px] ${thinSunken} flex items-center justify-center`}>
								<svg width="8" height="8" viewBox="0 0 8 8" className="block">
									<path d="M1 0h2v6h5v2H1z" fill="#000" />
								</svg>
							</div>
						</div>
						<HRuler />
					</div>
					<div className="flex-1 flex overflow-hidden">
						<div className="w-[23px] shrink-0">
							<VRuler />
						</div>
						<Doc />
					</div>
				</div>
				<VScroll />
			</div>
			<HScroll />
			<DrawBar />
			<StatusBar />
			<Dialog />
		</div>
	);
}
